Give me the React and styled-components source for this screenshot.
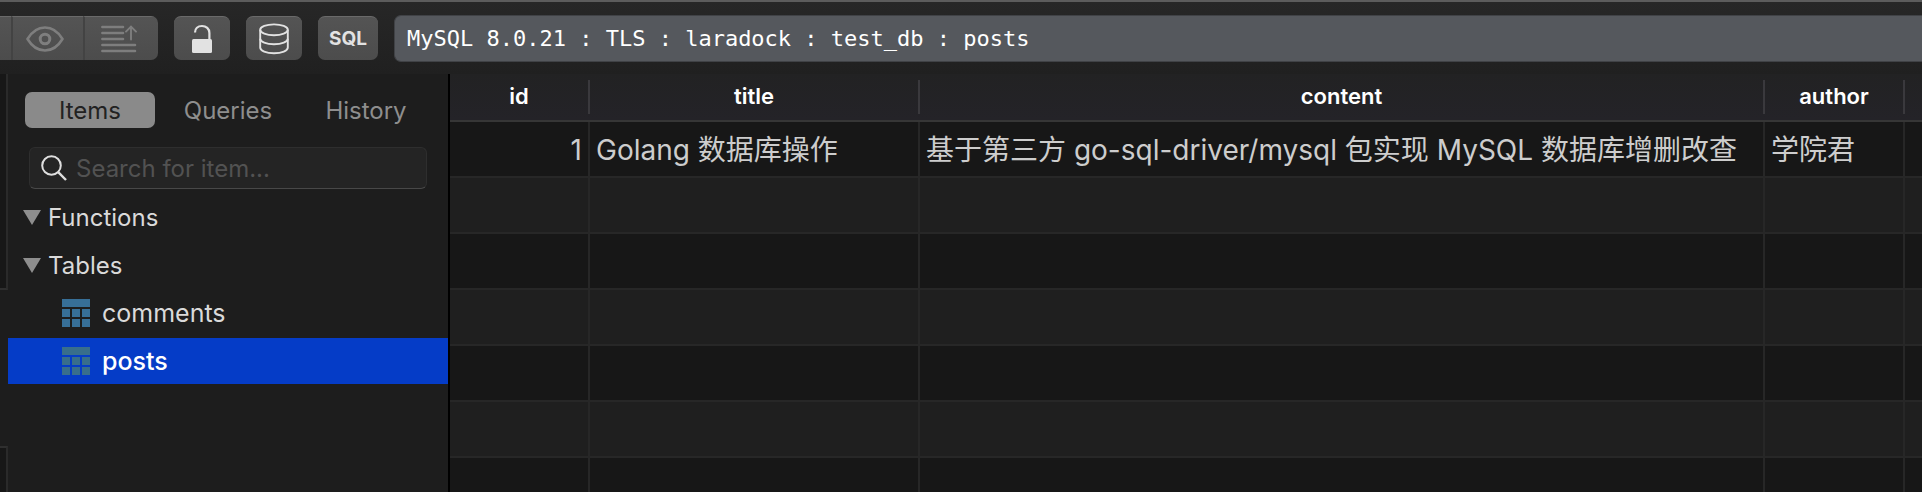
import React, { useState } from "react";
import styled, { createGlobalStyle } from "styled-components";

const GlobalStyle = createGlobalStyle`
  * {
    box-sizing: border-box;
  }

  body {
    margin: 0;
    background-color: #1d1d1d;
    font-family: Inter, "Noto Sans CJK SC", sans-serif;
  }

  button,
  input {
    font-family: inherit;
    margin: 0;
    padding: 0;
    border: none;
  }
`;

const Window = styled.div`
  display: flex;
  flex-direction: column;
  height: 100vh;
  overflow: hidden;
`;

const Toolbar = styled.header`
  display: flex;
  align-items: center;
  flex-shrink: 0;
  gap: 16px;
  height: 74px;
  border-top: 2px solid #5c5c5c;
  background: linear-gradient(to bottom, #272727, #202020);
`;

const ToolButton = styled.button`
  display: flex;
  align-items: center;
  justify-content: center;
  width: ${(props) => props.$width || 56}px;
  height: 44px;
  border-top: 1px solid #6a6a6a;
  border-radius: 7px;
  background: linear-gradient(to bottom, #545454, #4c4c4c);
  color: #e2e2e2;
  font-size: 19px;
  font-weight: 700;
`;

const GroupButton = styled(ToolButton)`
  padding-right: 6px;
  border-radius: 0;
  color: #7e7e7e;
`;

const ButtonGroup = styled.div`
  display: flex;
  border-radius: 0 7px 7px 0;
  overflow: hidden;

  > * + * {
    border-left: 2px solid #434343;
  }
`;

const Location = styled.div`
  flex: 1;
  height: 47px;
  padding-left: 12px;
  border: 1px solid #404246;
  border-right: none;
  border-radius: 7px 0 0 7px;
  background-color: #55585d;
  color: #fff;
  font-family: "DejaVu Sans Mono", monospace;
  font-size: 22px;
  line-height: 46px;
  white-space: nowrap;
`;

const Body = styled.div`
  display: flex;
  flex: 1;
  min-height: 0;
`;

const Rail = styled.div`
  display: flex;
  flex-direction: column;
  gap: 156px;
  width: 8px;
`;

const RailTop = styled.div`
  height: 216px;
  border-right: 2px solid #2a2a2a;
  border-bottom: 2px solid #2f2f2f;
  background-color: #171717;
`;

const RailBottom = styled.div`
  flex: 1;
  border-top: 2px solid #2f2f2f;
  border-right: 2px solid #2a2a2a;
  background-color: #171717;
`;

const Sidebar = styled.aside`
  width: 442px;
  flex-shrink: 0;
  border-right: 2px solid #000;
  background-color: #1d1d1d;
`;

const Tabs = styled.div`
  display: flex;
  gap: 8px;
  padding: 18px 17px 0;
`;

const Tab = styled.button`
  flex: 1;
  height: 36px;
  padding-top: 2px;
  border-radius: 7px;
  background-color: ${(props) => (props.$active ? "#8a8a8a" : "transparent")};
  color: ${(props) => (props.$active ? "#222" : "#8e8e8e")};
  font-size: 24px;
  line-height: 34px;
`;

const SearchBox = styled.label`
  display: flex;
  align-items: center;
  gap: 9px;
  height: 42px;
  margin: 19px 21px 5px;
  padding-left: 11px;
  border: 1px solid #2e2e2e;
  border-bottom-color: #484848;
  border-radius: 6px;
  background-color: #242424;
  color: #dedede;
`;

const SearchInput = styled.input`
  flex: 1;
  min-width: 0;
  background: transparent;
  color: #d6d6d6;
  font-size: 24px;
  outline: none;

  &::placeholder {
    color: #525252;
    opacity: 1;
  }
`;

const Tree = styled.div`
  display: flex;
  flex-direction: column;
  gap: 2px;
`;

const TreeRow = styled.button`
  display: flex;
  align-items: center;
  width: 100%;
  height: 46px;
  font-size: 24px;
  text-align: left;
`;

const GroupRow = styled(TreeRow)`
  gap: 7px;
  padding-left: 15px;
  background-color: transparent;
  color: #dadada;
`;

const ItemRow = styled(TreeRow)`
  gap: 12px;
  padding-left: 54px;
  background-color: ${(props) => (props.$selected ? "#053cc7" : "transparent")};
  color: ${(props) => (props.$selected ? "#fff" : "#dadada")};
  font-size: 25px;
  font-weight: ${(props) => (props.$selected ? 500 : 400)};

  svg {
    fill: ${(props) => (props.$selected ? "#386e8c" : "#376f97")};
  }
`;

const Grid = styled.main`
  flex: 1;
  min-width: 0;
  overflow: hidden;
`;

const Table = styled.table`
  width: 100%;
  table-layout: fixed;
  border-collapse: separate;
  border-spacing: 0;
`;

const Column = styled.col`
  width: ${(props) => props.$width};
`;

const HeadCell = styled.th`
  height: 48px;
  padding: 6px 0;
  border-bottom: 2px solid #363636;
  background: linear-gradient(to bottom, #222223, #242328);
  color: #fff;
  font-size: 22px;
  font-weight: 600;
`;

const HeadLabel = styled.div`
  height: 34px;
  border-right: ${(props) => (props.$last ? "none" : "2px solid #3a393d")};
  line-height: 32px;
`;

const BodyRow = styled.tr`
  background-color: #171717;

  &:nth-child(even) {
    background-color: #1f1f1f;
  }
`;

const Cell = styled.td`
  height: 56px;
  padding: 2px 6px 0;
  border-right: 2px solid #272727;
  border-bottom: 2px solid #272727;
  color: #cdcdcd;
  font-size: 28px;
  line-height: 52px;
  text-align: ${(props) => (props.$number ? "right" : "left")};
  white-space: nowrap;

  &:last-child {
    border-right: none;
  }
`;

const EyeIcon = () => (
  <svg width="38" height="26" viewBox="0 0 38 26" fill="none" stroke="currentColor">
    <path d="M1.5 13C6 5.5 12 1.5 19 1.5S32 5.5 36.5 13C32 20.5 26 24.5 19 24.5S6 20.5 1.5 13Z" strokeWidth="2.6" strokeLinejoin="round" />
    <circle cx="19" cy="13" r="4.8" strokeWidth="3" />
  </svg>
);

const TextUpIcon = () => (
  <svg width="36" height="28" viewBox="0 0 36 28" fill="none" stroke="currentColor" strokeWidth="2.6" strokeLinecap="round">
    <path d="M1.4 2H22M1.4 8H22M1.4 14H22M1.4 20H34M1.4 26H34" />
    <path d="M30 14.5V1.8M25 6.6L30 1.6L35 6.6" strokeWidth="1.9" />
  </svg>
);

const UnlockIcon = () => (
  <svg width="22" height="30" viewBox="0 0 22 30" fill="none">
    <path d="M4 8.6C4 4.6 6.8 2 11 2s7.4 2.8 7.4 7V16" stroke="currentColor" strokeWidth="2.2" />
    <rect x="1" y="15" width="20" height="14" rx="1.5" fill="currentColor" />
  </svg>
);

const DatabaseIcon = () => (
  <svg width="30" height="32" viewBox="0 0 30 32" fill="none" stroke="currentColor" strokeWidth="1.9">
    <ellipse cx="15" cy="6.8" rx="13.8" ry="5.4" />
    <path d="M1.2 6.8V24.6C1.2 27.8 7.2 30.2 15 30.2S28.8 27.8 28.8 24.6V6.8" />
    <path d="M1.2 15.8C1.2 18.8 7.2 21.2 15 21.2S28.8 18.8 28.8 15.8" />
  </svg>
);

const SearchIcon = () => (
  <svg width="26" height="26" viewBox="0 0 26 26" fill="none" stroke="currentColor" strokeWidth="2">
    <circle cx="10.5" cy="10.5" r="9.3" />
    <path d="M17.2 17.2L25 25" strokeWidth="2.4" />
  </svg>
);

const Triangle = () => (
  <svg width="18" height="15" viewBox="0 0 18 15" fill="#8e8e8e">
    <path d="M0 0H18L9 15Z" />
  </svg>
);

const TableIcon = () => (
  <svg width="28" height="28" viewBox="0 0 28 28">
    <path d="M0 0H28V8H0ZM0 10H8V18H0ZM10 10H18V18H10ZM20 10H28V18H20ZM0 20H8V28H0ZM10 20H18V28H10ZM20 20H28V28H20Z" />
  </svg>
);

const tabs = ["Items", "Queries", "History"];
const tables = ["comments", "posts"];

const columns = [
  { name: "id", width: "140px" },
  { name: "title", width: "330px" },
  { name: "content", width: "auto" },
  { name: "author", width: "140px" },
  { name: "", width: "17px" },
];

const rows = [
  ["1", "Golang 数据库操作", "基于第三方 go-sql-driver/mysql 包实现 MySQL 数据库增删改查", "学院君", ""],
  ...Array.from({ length: 6 }, () => ["", "", "", "", ""]),
];

const App = () => {
  const [tab, setTab] = useState("Items");
  const [selected, setSelected] = useState("posts");
  const [search, setSearch] = useState("");

  return (
    <>
      <GlobalStyle />
      <Window>
        <Toolbar>
          <ButtonGroup>
            <GroupButton $width={11} aria-label="Back" />
            <GroupButton $width={72} aria-label="Preview">
              <EyeIcon />
            </GroupButton>
            <GroupButton $width={75} aria-label="Commit">
              <TextUpIcon />
            </GroupButton>
          </ButtonGroup>
          <ToolButton aria-label="Unlock">
            <UnlockIcon />
          </ToolButton>
          <ToolButton aria-label="Databases">
            <DatabaseIcon />
          </ToolButton>
          <ToolButton $width={60}>SQL</ToolButton>
          <Location>MySQL 8.0.21 : TLS : laradock : test_db : posts</Location>
        </Toolbar>

        <Body>
          <Rail>
            <RailTop />
            <RailBottom />
          </Rail>

          <Sidebar>
            <Tabs>
              {tabs.map((name) => (
                <Tab key={name} $active={name === tab} onClick={() => setTab(name)}>
                  {name}
                </Tab>
              ))}
            </Tabs>
            <SearchBox>
              <SearchIcon />
              <SearchInput
                type="text"
                aria-label="Search for item"
                placeholder="Search for item..."
                value={search}
                onChange={(e) => setSearch(e.target.value)}
              />
            </SearchBox>
            <Tree>
              <GroupRow>
                <Triangle />
                Functions
              </GroupRow>
              <GroupRow>
                <Triangle />
                Tables
              </GroupRow>
              {tables.map((name) => (
                <ItemRow key={name} $selected={name === selected} onClick={() => setSelected(name)}>
                  <TableIcon />
                  {name}
                </ItemRow>
              ))}
            </Tree>
          </Sidebar>

          <Grid>
            <Table>
              <colgroup>
                {columns.map((column) => (
                  <Column key={column.name} $width={column.width} />
                ))}
              </colgroup>
              <thead>
                <tr>
                  {columns.map((column) => (
                    <HeadCell key={column.name}>
                      <HeadLabel $last={!column.name}>{column.name}</HeadLabel>
                    </HeadCell>
                  ))}
                </tr>
              </thead>
              <tbody>
                {rows.map((row, i) => (
                  <BodyRow key={i}>
                    {row.map((value, j) => (
                      <Cell key={j} $number={j === 0}>
                        {value}
                      </Cell>
                    ))}
                  </BodyRow>
                ))}
              </tbody>
            </Table>
          </Grid>
        </Body>
      </Window>
    </>
  );
};

export default App;
